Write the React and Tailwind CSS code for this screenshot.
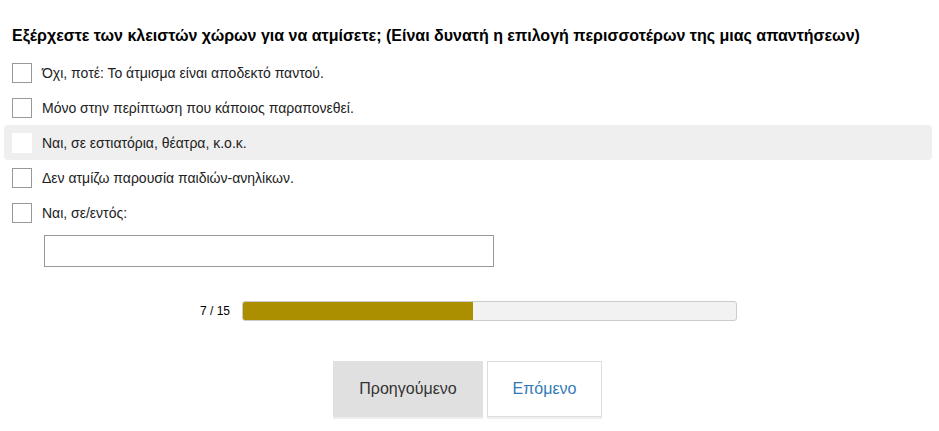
import React from "react";

const options = [
  "Όχι, ποτέ: Το άτμισμα είναι αποδεκτό παντού.",
  "Μόνο στην περίπτωση που κάποιος παραπονεθεί.",
  "Ναι, σε εστιατόρια, θέατρα, κ.ο.κ.",
  "Δεν ατμίζω παρουσία παιδιών-ανηλίκων.",
  "Ναι, σε/εντός:",
];

export default function App() {
  return (
    <div className="w-[939px] h-[431px] bg-white font-['Liberation_Sans',Arial,sans-serif] text-[#222]">
      <div className="pt-[27px] pl-[12px]">
        <h1 className="text-[16px] leading-[18px] font-bold text-black">
          Εξέρχεστε των κλειστών χώρων για να ατμίσετε; (Είναι δυνατή η επιλογή περισσοτέρων της μιας απαντήσεων)
        </h1>
      </div>
      <div className="mt-[10px] pl-[4px] w-[932px]">
        {options.map((o, i) => (
          <div
            key={i}
            className={
              "h-[35px] flex items-center px-[8px] rounded-[4px] " +
              (i === 2 ? "bg-[#efefef]" : "")
            }
          >
            <div
              className={
                "w-[20px] h-[20px] shrink-0 bg-white " +
                (i === 2 ? "" : "border border-[#999]")
              }
            />
            <span className="ml-[10px] text-[14px] leading-[16px]">{o}</span>
          </div>
        ))}
      </div>
      <div className="mt-[5px] pl-[44px]">
        <div className="w-[450px] h-[32px] border border-[#999] bg-white" />
      </div>
      <div className="mt-[34px] flex items-center justify-center pr-[2px]">
        <span className="text-[12px] leading-[14px] text-black">7 / 15</span>
        <div className="ml-[12px] w-[495px] h-[20px] bg-[#f2f2f2] border border-[#ccc] rounded-[3px] overflow-hidden">
          <div className="h-full w-[46.67%] bg-[#ac8f00]" />
        </div>
      </div>
      <div className="mt-[40px] flex justify-center gap-[4px] pr-[4px]">
        <button className="w-[150px] h-[56px] bg-[#e0e0e0] text-[16px] text-[#333] shadow-[0_2px_0_#eeeeee]">
          Προηγούμενο
        </button>
        <button className="w-[115px] h-[56px] bg-white border border-[#ddd] text-[16px] text-[#337ab7] shadow-[0_2px_0_#eeeeee]">
          Επόμενο
        </button>
      </div>
    </div>
  );
}
